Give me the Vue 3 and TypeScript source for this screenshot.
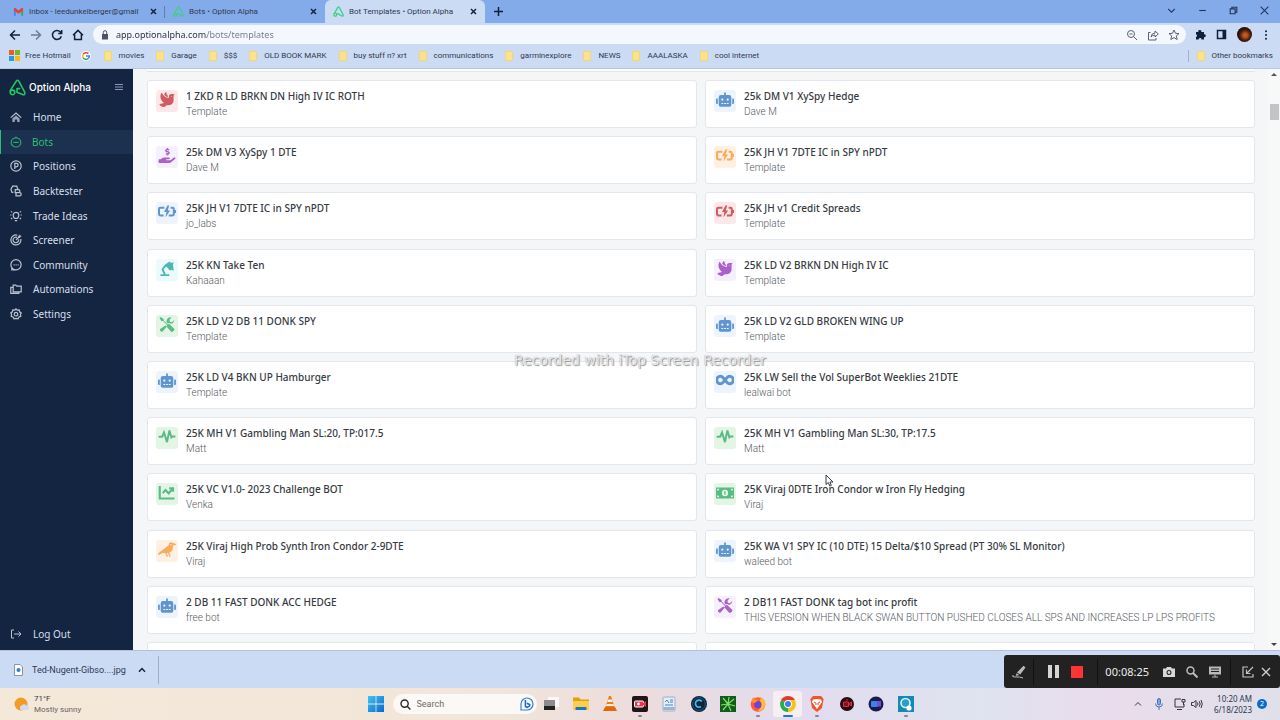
<script setup lang="ts">
interface Glyph {
  box: string
  fill?: string
  line?: string
  weight?: number
}
interface Bot {
  name: string
  by: string
  icon: string
  tone: string
}
interface NavItem {
  label: string
  line: string
  fill?: string
  active?: boolean
}

const glyphs: Record<string, Glyph> = {
  robot: {
    box: '0 0 640 512',
    fill: 'M32 224H64V416H32A32 32 0 0 1 0 384V256A32 32 0 0 1 32 224ZM544 176V448a64 64 0 0 1-64 64H160a64 64 0 0 1-64-64V176a80 80 0 0 1 80-80H288V32a32 32 0 0 1 64 0V96H464A80 80 0 0 1 544 176ZM264 256a40 40 0 1 0-40 40A40 40 0 0 0 264 256Zm-8 128H192v32h64Zm96 0H288v32h64ZM456 256a40 40 0 1 0-40 40A40 40 0 0 0 456 256Zm-8 128H384v32h64ZM640 256V384a32 32 0 0 1-32 32H576V224h32A32 32 0 0 1 640 256Z'
  },
  dove: {
    box: '0 0 512 512',
    fill: 'M288 167.2v-28.1c-28.2-36.3-47.1-79.3-54.1-125.2-2.1-13.5-19-18.8-27.8-8.3-21.1 24.9-37.7 54.1-48.9 86.5 34.2 38.3 80 64.6 130.8 75.1zM400 64c-44.2 0-80 35.9-80 80.1v59.4C215.6 197.3 127 133 87 41.8c-5.5-12.5-23.2-13.2-29-.9C41.4 76 32 115.2 32 156.6c0 70.8 34.1 136.9 85.1 185.9 13.2 12.7 26.1 23.2 38.9 32.8l-143.9 36C1.4 414-3.4 426.4 2.6 435.7 20 462.6 63 508.2 155.8 512c8 .3 16-2.6 22.1-7.9l65.2-56.1H320c88.4 0 160-71.5 160-159.9V128l32-64H400zm0 96.1c-8.8 0-16-7.2-16-16s7.2-16 16-16 16 7.2 16 16-7.2 16-16 16z'
  },
  hand: {
    box: '0 0 576 512',
    fill: 'M271 144.3l54.3 14.3a8.6 8.6 0 0 1 6.6 8.1c0 4.6-4 8.4-9.1 8.4h-35.6a30 30 0 0 1-11.2-2.2c-5.2-2.2-11.3-1.7-15.3 2l-19 17.5a11.7 11.7 0 0 0 1.6 18.4 83.8 83.8 0 0 0 34.5 11.5V240c0 8.8 7.8 16 17.4 16h17.4c9.5 0 17.4-7.2 17.4-16V222.4c32.9-3.6 57.8-31 53.5-63-3.2-23-22.5-41.3-46.6-47.7L282.7 97.4a8.6 8.6 0 0 1-6.6-8.1c0-4.6 4-8.4 9.1-8.4h35.6a30 30 0 0 1 11.2 2.2c5.2 2.2 11.3 1.7 15.3-2l19-17.5a11.4 11.4 0 0 0-1.7-18.4 83.8 83.8 0 0 0-34.5-11.5V16c0-8.8-7.8-16-17.4-16h-17.4C285.8 0 278 7.2 278 16V33.6c-32.9 3.6-57.9 31-53.5 63 3.1 23 22.5 41.3 46.5 47.7ZM565.3 328.1c-11.8-10.7-30.2-10-42.6 0L430.3 402a63.6 63.6 0 0 1-40 14H272a16 16 0 0 1 0-32h78.3c15.9 0 30.7-10.9 33.2-26.6A32 32 0 0 0 352 320H192a117.7 117.7 0 0 0-74.1 26.3L71.4 384H16a16 16 0 0 0-16 16v96a16 16 0 0 0 16 16H372.8a64 64 0 0 0 40-14L564 377a32 32 0 0 0 1.3-48.9Z'
  },
  crow: {
    box: '0 0 640 512',
    fill: 'M544 32h-16.4C513 12.7 490 0 464 0c-44.2 0-80 35.8-80 80v21L12.1 393.6A30.2 30.2 0 0 0 0 417.7c0 22.5 23.6 37.1 43.7 27L165.3 384h96.5l44.4 120.1c2.3 6.2 9.1 9.4 15.4 7.2l22.5-8.2c6.2-2.3 9.4-9.2 7.2-15.4L312.9 384H352l5.7-.3 44.5 120.4c2.3 6.2 9.1 9.4 15.4 7.2l22.5-8.2c6.2-2.3 9.4-9.2 7.2-15.4L401.2 371.4C471.8 347.6 523.5 281.4 528 201.9V112l112-16c0-44.2-43-64-96-64zm-80 72a24 24 0 1 1 0-48 24 24 0 0 1 0 48z'
  },
  battery: {
    box: '0 0 18 14',
    fill: 'M9.4 1 6 7.6h2.4L7.4 13l4.8-7H9.8L11.2 1Z',
    line: 'M6.4 3.2H2.6Q1 3.2 1 4.6v5Q1 11 2.600 11H5.600M12.600 3.200h1.600q1.600 0 1.600 1.400v5q0 1.400-1.600 1.400H10.800M17 5.600v3',
    weight: 2
  },
  lamp: {
    box: '0 0 18 16',
    fill: 'M7 3.6 11.8.6l1.4 1.6 2.8-1-.6 3 .8 6.2-2.4-1.2a2 2 0 0 1-3.4-1.6L6.8 5.4ZM2 14h9.4v2H2Z',
    line: 'M7.4 5 4.2 9l2.6 5.4',
    weight: 2
  },
  tools: {
    box: '0 0 16 16',
    fill: 'M1 0 0 1l2 3.2h1.8L8 8.4 7.4 10l4.8 5.4q1 1 2.2 0l1-1q1-1.2 0-2.2L10.4 7.4 8.8 8 4.4 3.6V2ZM15.7 3.2l-2.4 2.3-2.2-.4-.5-2.3L13 .3A4.4 4.4 0 0 0 7.7 5.8L9 7l1.4-.7 1.6 1A4.4 4.4 0 0 0 15.7 3.2ZM6.3 9 .7 12.8a2 2 0 0 0 2.6 2.7l4.3-5Z'
  },
  pulse: { box: '0 0 18 14', line: 'M.6 7.2h3.6L6 3l3 9.6L11.4.9l2 7 1-1h3', weight: 2 },
  chart: { box: '0 0 16 14', line: 'M1.2 1v11.6H15M4 7.6l2.6-2.8 3 3L13 3.6M10 3h3.6v3.4', weight: 2 },
  infinity: {
    box: '0 0 18 14',
    line: 'M9 6.6C7 3.8 5.8 2.8 4.4 2.8a3.6 3.6 0 0 0 0 7.4C5.8 10.2 7 9.2 9 6.6s3.2-3.8 4.6-3.8a3.6 3.6 0 0 1 0 7.4C12.2 10.2 11 9.2 9 6.6Z',
    weight: 3
  },
  money: {
    box: '0 0 18 14',
    fill: 'M0 2h18v11H0ZM1.2 3.2v2a2 2 0 0 0 2-2ZM1.2 11.8h2a2 2 0 0 0-2-2ZM16.8 3.2h-2a2 2 0 0 0 2 2ZM16.8 11.8v-2a2 2 0 0 0-2 2ZM9 4.2a3 3.2 0 1 0 0 6.6 3 3.2 0 0 0 0-6.6ZM8.2 5.8h1.4v3.4H8.4V7h-.6Z'
  }
}

const bots: Bot[] = [
  { name: '1 ZKD R LD BRKN DN High IV IC ROTH', by: 'Template', icon: 'dove', tone: 'red' },
  { name: '25k DM V1 XySpy Hedge', by: 'Dave M', icon: 'robot', tone: 'blue' },
  { name: '25k DM V3 XySpy 1 DTE', by: 'Dave M', icon: 'hand', tone: 'purple' },
  { name: '25K JH V1 7DTE IC in SPY nPDT', by: 'Template', icon: 'battery', tone: 'orange' },
  { name: '25K JH V1 7DTE IC in SPY nPDT', by: 'jo_labs', icon: 'battery', tone: 'blue' },
  { name: '25K JH v1 Credit Spreads', by: 'Template', icon: 'battery', tone: 'red' },
  { name: '25K KN Take Ten', by: 'Kahaaan', icon: 'lamp', tone: 'teal' },
  { name: '25K LD V2 BRKN DN High IV IC', by: 'Template', icon: 'dove', tone: 'purple' },
  { name: '25K LD V2 DB 11 DONK SPY', by: 'Template', icon: 'tools', tone: 'green' },
  { name: '25K LD V2 GLD BROKEN WING UP', by: 'Template', icon: 'robot', tone: 'blue' },
  { name: '25K LD V4 BKN UP Hamburger', by: 'Template', icon: 'robot', tone: 'blue' },
  { name: '25K LW Sell the Vol SuperBot Weeklies 21DTE', by: 'lealwai bot', icon: 'infinity', tone: 'blue' },
  { name: '25K MH V1 Gambling Man SL:20, TP:017.5', by: 'Matt', icon: 'pulse', tone: 'green' },
  { name: '25K MH V1 Gambling Man SL:30, TP:17.5', by: 'Matt', icon: 'pulse', tone: 'green' },
  { name: '25K VC V1.0- 2023 Challenge BOT', by: 'Venka', icon: 'chart', tone: 'green' },
  { name: '25K Viraj 0DTE Iron Condor w Iron Fly Hedging', by: 'Viraj', icon: 'money', tone: 'green' },
  { name: '25K Viraj High Prob Synth Iron Condor 2-9DTE', by: 'Viraj', icon: 'crow', tone: 'orange' },
  { name: '25K WA V1 SPY IC (10 DTE) 15 Delta/$10 Spread (PT 30% SL Monitor)', by: 'waleed bot', icon: 'robot', tone: 'blue' },
  { name: '2 DB 11 FAST DONK ACC HEDGE', by: 'free bot', icon: 'robot', tone: 'blue' },
  { name: '2 DB11 FAST DONK tag bot inc profit', by: 'THIS VERSION WHEN BLACK SWAN BUTTON PUSHED CLOSES ALL SPS AND INCREASES LP LPS PROFITS', icon: 'tools', tone: 'purple' }
]

const nav: NavItem[] = [
  { label: 'Home', line: 'M.8 6.6 6 2l5.2 4.6', fill: 'M2.4 7.4 6 4.4l3.6 3V11H7.2V8.4H4.8V11H2.4Z' },
  { label: 'Bots', line: 'M6 .6v2M1.2 6.4a4.8 4.6 0 0 1 9.6 0 4.8 4.6 0 0 1-9.6 0M3.4 6.4h5.2', active: true },
  { label: 'Positions', line: 'M.8 6a5.2 5.2 0 1 0 10.4 0A5.2 5.2 0 1 0 .8 6M4.8 9V3.4h1.6a1.6 1.6 0 0 1 0 3.4H4.8' },
  { label: 'Backtester', line: 'M3.4 7.4H2L.9 4.3 2.6 1.2h4.2l1 3M5.2 4.6h3.2a1 1 0 0 1 0 3H5.2ZM5.2 7.6h4.4a1.6 1.6 0 0 1 0 3.2H6V7.6' },
  { label: 'Trade Ideas', line: 'M4.6 8.4Q3.2 7 3.2 5.2a2.8 2.8 0 0 1 5.6 0Q8.8 7 7.4 8.4ZM4.8 10.6h2.4M.2 5h1.2M10.6 5h1.2M1 1.4l1.2 1M11 1.4l-1.2 1M1 9l1.2-1M11 9 9.8 8' },
  { label: 'Screener', line: 'M7.4 1.2A5 5 0 1 0 10.8 5M7 3.4A2.8 2.8 0 1 0 8.6 5.4M6 6l4-4', fill: 'M8 2.4 10 .2l.4 1.4 1.4.4-2.2 2H8Z' },
  { label: 'Community', line: 'M.9 5.8a5.1 5.1 0 1 0 10.2 0A5.1 5.1 0 1 0 .9 5.8M1.8 9v2H6M3.6 5.8h1M5.6 5.8h1M7.6 5.8h1' },
  { label: 'Automations', line: 'M3.2 2.2h2.6l1 1h4.4v5.6h-8ZM3 4.4H.8v6h8V9' },
  { label: 'Settings', line: 'M6 .8 7.2 2.2l2-.2.4 1.8 1.6 1.2-.8 1.4.4 2-1.8.6L8 10.8 6 10.4l-2 .4-1-1.8-1.8-.6.4-2L.8 5l1.6-1.2L2.8 2l2 .2ZM4.2 6.2a1.8 1.8 0 1 0 3.6 0 1.8 1.8 0 1 0-3.6 0' }
]

const folders = ['movies', 'Garage', '$$$', 'OLD BOOK MARK', 'buy stuff n? xrt', 'communications', 'garminexplore', 'NEWS', 'AAALASKA', 'cool internet']

const tabs = [
  { title: 'Inbox - leedunkelberger@gmail', kind: 'mail', active: false },
  { title: 'Bots • Option Alpha', kind: 'alpha', active: false },
  { title: 'Bot Templates • Option Alpha', kind: 'alpha', active: true }
]
</script>

<template>
  <div class="screen">
    <header class="tabbar">
      <div v-for="t in tabs" :key="t.title" class="tab" :class="{ active: t.active }">
        <svg v-if="t.kind === 'mail'" class="fav" viewBox="0 0 12 12">
          <path d="M1 10.5V2.6l2 1.6v6.3Z" fill="#4285f4" /><path d="M9 10.5V4.2l2-1.6v7.9Z" fill="#34a853" />
          <path d="M1 2.6 2.4 2 6 5l3.6-3 1.4.6v2.2L6 8.4 1 4.8Z" fill="#e0443a" />
        </svg>
        <svg v-else class="fav" viewBox="0 0 17 17" fill="none" stroke="#3fcf86" stroke-width="2" stroke-linejoin="round" stroke-linecap="round">
          <path d="M1.2 13.400a2.300 2.300 0 1 0 4.600 0 2.300 2.300 0 1 0-4.600 0L7.400 2.200q1.200-1.600 2.400 0L15.800 13.800q.4 2-1.600 2L7.400 11.800" />
        </svg>
        <span class="tab-title">{{ t.title }}</span>
        <button class="plain" aria-label="Close tab">
          <svg width="7" height="7" viewBox="0 0 7 7" stroke="#16233c" stroke-width="1.500"><path d="M1 1l5 5M6 1 1 6" /></svg>
        </button>
      </div>
      <button class="plain new-tab" aria-label="New tab">
        <svg width="9" height="9" viewBox="0 0 9 9" stroke="#10203c" stroke-width="1.500"><path d="M4.500 0v9M0 4.500h9" /></svg>
      </button>
      <div class="window-buttons">
        <button class="plain" aria-label="Search tabs"><svg viewBox="0 0 10 10"><path d="M2 3.500 5 6.500 8 3.500" /></svg></button>
        <button class="plain" aria-label="Minimize"><svg viewBox="0 0 10 10"><path d="M2 5h6" /></svg></button>
        <button class="plain" aria-label="Restore"><svg viewBox="0 0 10 10"><path d="M2 3.500h4.500V8H2ZM3.500 3.500V2H8v4.500H6.500" /></svg></button>
        <button class="plain" aria-label="Close"><svg viewBox="0 0 10 10"><path d="M1.500 1.500l7 7M8.500 1.500l-7 7" /></svg></button>
      </div>
    </header>

    <div class="toolbar">
      <button class="plain tool" aria-label="Back"><svg viewBox="0 0 12 12"><path d="M11 6H1.500M6 1.500 1.500 6 6 10.500" /></svg></button>
      <button class="plain tool faded" aria-label="Forward"><svg viewBox="0 0 12 12"><path d="M1 6h9.500M6 1.500 10.500 6 6 10.500" /></svg></button>
      <button class="plain tool" aria-label="Reload"><svg viewBox="0 0 12 12"><path d="M10.300 7.200A4.500 4.500 0 1 1 9.200 2.800L10.600 4.200M10.700 1v3.400H7.200" /></svg></button>
      <button class="plain tool" aria-label="Home page"><svg viewBox="0 0 12 12"><path d="M1 6.200 6 1.400l5 4.800M2.600 5.200v5.400h6.800V5.200" /></svg></button>
      <div class="address">
        <svg width="8" height="10" viewBox="0 0 8 10"><path d="M1 4h6v5.500H1Z" fill="#4c5362" /><path d="M2.300 4V2.400a1.700 1.700 0 0 1 3.400 0V4" fill="none" stroke="#4c5362" /></svg>
        <input class="url" aria-label="Address" value="app.optionalpha.com/bots/templates" />
        <button class="plain" aria-label="Zoom"><svg class="thin" viewBox="0 0 12 12"><path d="M1.500 5a3.500 3.500 0 1 0 7 0 3.500 3.500 0 1 0-7 0M7.600 7.600 11 11M3.500 5h3" /></svg></button>
        <button class="plain" aria-label="Share"><svg class="thin" viewBox="0 0 12 12"><path d="M3.500 3.500H1.500V11H9V9M4 8q.4-4 4-4V2l3.300 3L8 8V6Q5.500 6 4 8Z" /></svg></button>
        <button class="plain" aria-label="Bookmark"><svg class="thin" viewBox="0 0 12 12"><path d="M6 1l1.500 3.300 3.500.3-2.700 2.300.9 3.600L6 8.600l-3.200 1.900.9-3.600L1 4.600l3.500-.3Z" /></svg></button>
      </div>
      <div class="extras">
        <button class="plain" aria-label="Extensions"><svg width="11" height="11" viewBox="0 0 11 11"><path d="M1 3h2.400a1.500 1.500 0 1 1 2.800 0H9v2.400a1.400 1.400 0 1 1 0 2.700V10.500H6.500a1.400 1.400 0 0 0-2.800 0H1V8a1.400 1.400 0 0 0 0-2.700Z" fill="#10203c" /></svg></button>
        <button class="plain" aria-label="Side panel"><svg width="11" height="11" viewBox="0 0 11 11"><path d="M1.500 1.500h8v8h-8Z" fill="none" stroke="#10203c" stroke-width="1.500" /><path d="M6.500 1.500h3v8h-3Z" fill="#10203c" /></svg></button>
        <button class="plain avatar" aria-label="Profile"></button>
        <button class="plain more" aria-label="Menu"><svg width="4" height="10" viewBox="0 0 4 10" fill="#10203c"><circle cx="2" cy="1.200" r="1" /><circle cx="2" cy="5" r="1" /><circle cx="2" cy="8.800" r="1" /></svg></button>
      </div>
    </div>

    <nav class="bookmarks" aria-label="Bookmarks">
      <a href="#" class="mark">
        <svg width="11" height="11" viewBox="0 0 11 11"><path d="M0 0h5v5H0Z" fill="#ee5a2c" /><path d="M6 0h5v5H6Z" fill="#7cb518" /><path d="M0 6h5v5H0Z" fill="#1ba0e8" /><path d="M6 6h5v5H6Z" fill="#f9b813" /></svg>
        Free Hotmail
      </a>
      <a href="#" class="google" aria-label="Google">
        <svg width="10" height="10" viewBox="0 0 10 10" fill="none" stroke-width="1.500">
          <circle cx="5" cy="5" r="5" fill="#fff" stroke="none" />
          <path d="M7.400 2.600A3.400 3.400 0 0 0 2 3.500" stroke="#ea4335" /><path d="M2 3.500a3.400 3.400 0 0 0 0 3" stroke="#fbbc05" />
          <path d="M2 6.500a3.400 3.400 0 0 0 5.300 1" stroke="#34a853" /><path d="M7.300 7.500A3.400 3.400 0 0 0 8.400 5H5" stroke="#4285f4" />
        </svg>
      </a>
      <a v-for="f in folders" :key="f" href="#" class="mark"><i class="folder"></i>{{ f }}</a>
      <a href="#" class="mark other"><i class="folder"></i>Other bookmarks</a>
    </nav>

    <div class="app">
      <aside class="side">
        <div class="brand">
          <svg width="17" height="17" viewBox="0 0 17 17" fill="none" stroke="#22c55e" stroke-width="1.600" stroke-linejoin="round" stroke-linecap="round">
            <path d="M1.2 13.400a2.300 2.300 0 1 0 4.600 0 2.300 2.300 0 1 0-4.600 0V11.600L7.200 2.200q1.300-2 2.600 0L15.800 13.400q.4 2.400-1.600 2.400L8 13.200V9.600h2.600" />
          </svg>
          <span class="brand-name">Option Alpha</span>
          <button class="plain" aria-label="Collapse menu"><svg width="8" height="8" viewBox="0 0 8 8" stroke="#8b99b2"><path d="M0 1.500h8M0 4h8M0 6.500h8" /></svg></button>
        </div>
        <nav class="menu" aria-label="Main">
          <a v-for="n in nav" :key="n.label" href="#" class="item" :class="{ active: n.active }">
            <svg width="12" height="12" viewBox="0 0 12 12"><path :d="n.line" fill="none" stroke="currentColor" stroke-width="1.200" /><path v-if="n.fill" :d="n.fill" fill="currentColor" opacity=".8" /></svg>
            {{ n.label }}
          </a>
        </nav>
        <a href="#" class="item logout">
          <svg width="12" height="12" viewBox="0 0 12 12" fill="none" stroke="currentColor"><path d="M4 2H1.500v8H4M4 6h7M8.500 3.500 11 6 8.500 8.500" /></svg>
          Log Out
        </a>
      </aside>

      <main class="main">
        <div class="scroll-area">
          <div class="previous"></div>
          <ul class="grid">
            <li v-for="(b, i) in bots" :key="i" class="card">
              <span class="tile" :class="b.tone">
                <svg :viewBox="glyphs[b.icon].box" width="18" height="15">
                  <path v-if="glyphs[b.icon].fill" :d="glyphs[b.icon].fill" fill="currentColor" fill-rule="evenodd" />
                  <path v-if="glyphs[b.icon].line" :d="glyphs[b.icon].line" fill="none" stroke="currentColor" :stroke-width="glyphs[b.icon].weight" />
                </svg>
              </span>
              <div class="text">
                <h2>{{ b.name }}</h2>
                <p>{{ b.by }}</p>
              </div>
            </li>
            <li class="card"></li>
            <li class="card"></li>
          </ul>
        </div>
        <div class="scrollbar"><i class="up"></i><i class="thumb"></i><i class="down"></i></div>
      </main>
    </div>

    <footer class="downloads">
      <button class="plain file">
        <svg width="9" height="12" viewBox="0 0 9 12"><path d="M.5.500H6L8.500 3v8.500h-8Z" fill="#fff" stroke="#8a94a8" /><circle cx="4.500" cy="6" r="2" fill="#2e7fd6" /></svg>
        Ted-Nugent-Gibso....jpg
      </button>
      <button class="plain" aria-label="Download options"><svg width="8" height="6" viewBox="0 0 8 6" fill="none" stroke="#16233c" stroke-width="1.500"><path d="M1 4.800 4 1.500 7 4.800" /></svg></button>
    </footer>

    <footer class="taskbar">
      <div class="weather">
        <svg width="15" height="15" viewBox="0 0 15 15"><circle cx="7" cy="7" r="6.500" fill="#f59a23" /><path d="M7 13a2.500 2.500 0 0 1 .4-4.400 3 3 0 0 1 5-.2A2.300 2.300 0 0 1 13 13Z" fill="#cfdcf2" /></svg>
        <p>71°F<br /><span>Mostly sunny</span></p>
      </div>
      <div class="dock">
        <button class="plain" aria-label="Start"><svg width="16" height="16" viewBox="0 0 16 16"><defs><linearGradient id="win" x2="1" y2="1"><stop stop-color="#3cc4f5" /><stop offset="1" stop-color="#0a68cf" /></linearGradient></defs><path d="M0 0h7.600v7.600H0ZM8.400 0H16v7.600H8.400ZM0 8.400h7.600V16H0ZM8.400 8.400H16V16H8.400Z" fill="url(#win)" /></svg></button>
        <label class="search">
          <svg width="11" height="11" viewBox="0 0 11 11" fill="none" stroke="#26282e" stroke-width="1.400"><circle cx="4.600" cy="4.600" r="3.600" /><path d="M7.200 7.200 10.400 10.400" /></svg>
          <input placeholder="Search" aria-label="Search" />
          <svg width="14" height="14" viewBox="0 0 14 14" fill="none"><path d="M1 13V7a6 6 0 1 1 6 6Z" stroke="#2a88de" stroke-width="1.200" /><path d="M5.400 3v6.500l1.800 1 2.500-1.600V7.500L6.800 6.300" stroke="#2065c8" stroke-width="1.500" /></svg>
        </label>
        <div class="apps">
          <button class="plain" aria-label="Task view"><svg viewBox="0 0 16 16"><path d="M5 1h11v10H5Z" fill="#fbf9f7" /><path d="M1 4h11v10H1Z" fill="#8d8d90" /><path d="M1 10h11v4H1Z" fill="#222" /></svg></button>
          <button class="plain" aria-label="File Explorer"><svg viewBox="0 0 16 16"><path d="M0 1.500h6l1.500 2H16V14H0Z" fill="#dfa012" /><path d="M0 5h16v9H0Z" fill="#fbcf4c" /><path d="M3.500 11h9q1 0 1 1v2h-11v-2q0-1 1-1Z" fill="#1577c8" /></svg></button>
          <button class="plain" aria-label="VLC"><svg viewBox="0 0 16 16"><path d="M7 0h2l3.500 11h-9Z" fill="#ef7d16" /><path d="M6 3.500h4l.8 2.500H5.200ZM4.500 8h7l.6 2h-8.200Z" fill="#f1ece6" /><path d="M3 11h10l2 4H1Z" fill="#dd6a0b" /></svg></button>
          <button class="plain running" aria-label="Screen recorder"><svg viewBox="0 0 16 16"><rect width="16" height="16" rx="2" fill="#201517" /><rect x="2.500" y="5" width="9" height="6" rx="1" fill="#e9364f" stroke="#fff" /><path d="M11 7l3-2v6l-3-2" fill="#e9364f" /><circle cx="6.500" cy="8" r="1.400" fill="#fff" /></svg></button>
          <button class="plain" aria-label="Notepad"><svg viewBox="0 0 16 16"><rect x="2" y="1" width="12" height="14" rx="1" fill="#e5edf5" stroke="#9bb2cb" /><path d="M4 6l2-2 2 3M9 4h3M9 6h3M4 9h8" stroke="#4286cf" fill="none" /><path d="M2.500 11h11v3h-11Z" fill="#a0b4c9" /></svg></button>
          <button class="plain" aria-label="Cleaner"><svg viewBox="0 0 16 16"><circle cx="8" cy="8" r="8" fill="#102334" /><circle cx="8" cy="8" r="6.300" stroke="#125b8a" fill="none" /><path d="M10.800 5.500A3.500 3.500 0 1 0 10 10.500" stroke="#39b8f2" stroke-width="1.800" fill="none" /></svg></button>
          <button class="plain" aria-label="Green app"><svg viewBox="0 0 16 16"><path d="M0 0h16v16H0Z" fill="#115c1a" /><path d="M8 8 3 2M8 8l1-7M8 8l6-5M8 8l7 2M8 8l3 7M8 8l-5 6M8 8 1 9" stroke="#7ee064" stroke-width="1.200" /></svg></button>
          <button class="plain running" aria-label="Firefox"><svg viewBox="0 0 16 16"><circle cx="8" cy="8.500" r="7.300" fill="#ff5c35" /><path d="M11 1q5 3 4 8.500A7 7 0 0 1 8 15Q13 10 10 5Z" fill="#ffbd32" /><circle cx="7.800" cy="8.800" r="3.700" fill="#7a3fd2" /><path d="M1 6q1-4 3-5 0 3 4 3L5 7Z" fill="#ff8f25" /></svg></button>
          <button class="plain running current" aria-label="Chrome"><svg viewBox="0 0 16 16"><path d="M8 8 1.100 4A8 8 0 0 1 14.900 4Z" fill="#e33b2e" /><path d="M8 8 1.100 4A8 8 0 0 0 8 16L11.500 10Z" fill="#2da94f" /><path d="M8 8V4h6.900A8 8 0 0 1 8 16Z" fill="#fbc116" /><circle cx="8" cy="8" r="3.900" fill="#fff" /><circle cx="8" cy="8" r="3" fill="#3e7ff0" /></svg></button>
          <button class="plain running" aria-label="Brave"><svg viewBox="0 0 16 16"><path d="M4 0h8l2.600 3L13 12l-5 4-5-4L1.400 3Z" fill="#f3542b" /><path d="M4 3.500 8 3l4 .5 1 2.500-2.500 3.500L8 13 5.500 9.500 3 6Z" fill="#fff" /><path d="M5 6l2 1v2M11 6 9 7v2" stroke="#f3542b" fill="none" /></svg></button>
          <button class="plain" aria-label="Capture"><svg viewBox="0 0 16 16"><circle cx="8" cy="8" r="7" fill="#250d12" /><path d="M4.500 6h5v4.500h-5ZM9.500 8l3-2v4Z" stroke="#e22a3c" fill="#7d1422" /><path d="M8 3v2" stroke="#e22a3c" /></svg></button>
          <button class="plain" aria-label="Editor"><svg viewBox="0 0 16 16"><circle cx="8" cy="8" r="7.500" fill="#1c1c4c" /><rect x="3" y="5" width="7" height="6" rx="1" fill="#3d82ec" /><path d="M9 5h4v5.500H9Z" fill="#6a52d8" /></svg></button>
          <button class="plain running" aria-label="Q app"><svg viewBox="0 0 16 16"><path d="M0 0h16v16H0Z" fill="#1787b4" /><circle cx="7.500" cy="7" r="4.500" fill="#2a9fca" stroke="#dff3fa" stroke-width="1.600" /><circle cx="11" cy="12" r="2.600" fill="#fff" /></svg></button>
        </div>
      </div>
      <div class="tray">
        <svg width="8" height="6" viewBox="0 0 8 6" fill="none" stroke="#34343c"><path d="M1 4.500 4 1.500l3 3" /></svg>
        <svg class="mic" width="8" height="12" viewBox="0 0 8 12" fill="none" stroke="#4a74b8"><rect x="2.500" y=".5" width="3" height="6.500" rx="1.500" fill="#7fa3dc" /><path d="M.5 5.500a3.500 3.500 0 0 0 7 0M4 9v3" /></svg>
        <svg width="12" height="12" viewBox="0 0 12 12" fill="none" stroke="#34343c"><path d="M7 1H1v8h9V6M3 11.500h5M8 1.500h3v2.500H8ZM9.500 4v3" /></svg>
        <svg width="12" height="12" viewBox="0 0 12 12" fill="none" stroke="#34343c"><path d="M.5 4.500h2L5 2.500v7L2.500 7.500h-2ZM6.500 4.500q1 1.500 0 3M8.200 3.200q2 2.800 0 5.600M10 2q2.500 4 0 8" /></svg>
        <p class="clock">10:20 AM<br />6/18/2023</p>
        <span class="badge">2</span>
      </div>
    </footer>

    <div class="recorder">
      <button class="plain seg pen" aria-label="Draw"><svg width="14" height="14" viewBox="0 0 14 14"><path d="M11.500.800 13.500 2.500 8.200 9.500 5 7.500ZM4.500 8.200l2.800 1.800-3.600 1Z" fill="#b9b9b9" /><path d="M1 10q-1.500 2 2 2 5-.5 8 1" stroke="#b9b9b9" fill="none" /></svg></button>
      <div class="seg controls">
        <button class="plain pause" aria-label="Pause"></button>
        <button class="plain stop" aria-label="Stop"></button>
      </div>
      <div class="seg status">
        <time>00:08:25</time>
        <button class="plain" aria-label="Screenshot"><svg width="12" height="12" viewBox="0 0 12 12"><path d="M0 2.500h3L4 1h4l1 1.500h3V11H0ZM6 4a2.500 2.500 0 1 0 0 5 2.500 2.500 0 0 0 0-5Z" fill="#d8d8d8" fill-rule="evenodd" /><circle cx="6" cy="6.500" r="1.400" fill="#d8d8d8" /></svg></button>
        <button class="plain" aria-label="Magnify"><svg width="12" height="12" viewBox="0 0 12 12" fill="none" stroke="#bdbdbd" stroke-width="1.500"><circle cx="4.500" cy="4.500" r="3.500" /><path d="M7 7l4.500 4.500" stroke-width="2" /></svg></button>
        <button class="plain" aria-label="Captions"><svg width="12" height="12" viewBox="0 0 12 12"><path d="M0 .5h12v8H0Z" fill="#b9b9b9" /><path d="M2 3h8M2 5.500h8" stroke="#222" /><path d="M6 8.500V11M3 11h6" stroke="#b9b9b9" /></svg></button>
      </div>
      <div class="seg finish">
        <button class="plain" aria-label="Shrink"><svg width="12" height="12" viewBox="0 0 12 12" fill="none" stroke="#c4c4c4" stroke-width="1.200"><path d="M6 1H1v10h10V8M11 1 5 7M4.500 3.500V7.500h4" /></svg></button>
        <button class="plain" aria-label="Close recorder"><svg width="10" height="10" viewBox="0 0 10 10" stroke="#d0d0d0" stroke-width="1.400"><path d="M1 1l8 8M9 1 1 9" /></svg></button>
      </div>
    </div>

    <p class="watermark">Recorded with iTop Screen Recorder</p>
    <svg class="pointer" width="9" height="13" viewBox="0 0 9 13"><path d="M1 1v9.500l2.300-2 1.500 3.600 1.500-.7L4.900 8H8Z" fill="#fff" stroke="#333a48" /></svg>
  </div>
</template>

<style>
body {
  margin: 0;
}
</style>

<style scoped>
* {
  box-sizing: border-box;
}
.screen {
  position: relative;
  display: flex;
  flex-direction: column;
  height: 100vh;
  overflow: hidden;
  font: 9px/12px 'Noto Sans', 'Open Sans', sans-serif;
  color: #2c3950;
}
svg {
  display: block;
  flex: none;
}
p,
h2,
ul {
  margin: 0;
  padding: 0;
}
a {
  color: inherit;
  text-decoration: none;
}
input {
  min-width: 0;
  border: 0;
  padding: 0;
  outline: 0;
  background: none;
  font: inherit;
  color: inherit;
}
.plain {
  display: flex;
  align-items: center;
  justify-content: center;
  flex: none;
  padding: 0;
  border: 0;
  background: none;
  font: inherit;
  color: inherit;
}
.tabbar {
  display: flex;
  align-items: center;
  height: 23px;
  padding-left: 5px;
  background: #84abe9;
}
.tab {
  display: flex;
  align-items: center;
  gap: 5px;
  width: 160px;
  height: 100%;
  padding: 0 8px 0 8px;
  font: 8px/12px Roboto, 'Noto Sans', sans-serif;
}
.tab:first-child {
  background: linear-gradient(#5f7fb4, #5f7fb4) right / 1px 12px no-repeat;
}
.tab.active {
  background: #ccdbf4;
  border-radius: 6px 6px 0 0;
}
.fav {
  width: 11px;
  height: 11px;
}
.tab-title {
  flex: 1;
  overflow: hidden;
  white-space: nowrap;
}
.new-tab {
  margin-left: 9px;
}
.window-buttons {
  display: flex;
  gap: 20px;
  margin-left: auto;
  padding: 0 10px 3px 0;
}
.window-buttons svg {
  width: 11px;
  height: 11px;
  fill: none;
  stroke: #22355c;
}
.toolbar {
  display: flex;
  align-items: center;
  gap: 9px;
  height: 23px;
  padding: 0 12px 0 9px;
  background: #ccdbf4;
}
.tool svg {
  width: 12px;
  height: 12px;
  fill: none;
  stroke: #10203c;
  stroke-width: 1.5;
}
.tool.faded {
  opacity: 0.5;
}
.address {
  display: flex;
  align-items: center;
  gap: 9px;
  flex: 1;
  height: 19px;
  padding: 0 6px 0 8px;
  border-radius: 10px;
  background: #f4f7fc;
}
.url {
  flex: 1;
  margin-left: -2px;
  height: 18px;
  background: linear-gradient(90deg, #28303e 91px, #737a88 91px);
  background-clip: text;
  color: transparent;
}
.thin {
  width: 12px;
  height: 12px;
  fill: none;
  stroke: #5a6272;
}
.extras {
  display: flex;
  align-items: center;
  gap: 10px;
}
.more {
  margin-left: 2px;
}
.avatar {
  width: 15px;
  height: 15px;
  border-radius: 50%;
  background: radial-gradient(circle at 55% 55%, #c05a1a 0 15%, #4a1c0c 45%, #0d0807 75%);
}
.bookmarks {
  display: flex;
  align-items: center;
  gap: 12px;
  height: 23px;
  padding: 0 7px 3px 9px;
  background: #ccdbf4;
  border-bottom: 1px solid #b9c7e0;
  font: 8px/12px Roboto, 'Noto Sans', sans-serif;
  white-space: nowrap;
}
.mark {
  display: flex;
  align-items: center;
  gap: 7px;
}
.google {
  margin: 0 1px 0 -2px;
}
.mark:first-child {
  gap: 5px;
}
.folder {
  width: 8px;
  height: 10px;
  background: #fce28a;
  border: 1px solid #f3d672;
  border-radius: 1px;
}
.other {
  margin-left: auto;
  padding-left: 8px;
  border-left: 1px solid #a3b4d3;
}
.app {
  display: flex;
  flex: 1;
  min-height: 0;
}
.side {
  display: flex;
  flex-direction: column;
  width: 133px;
  background: #142542;
  color: #d9dfe9;
  font-size: 10px;
}
.brand {
  display: flex;
  align-items: center;
  gap: 3px;
  height: 36px;
  padding: 0 10px 0 9px;
}
.brand-name {
  flex: none;
  margin-right: auto;
  white-space: nowrap;
  font: 500 10px/16px Inter, sans-serif;
  color: #fff;
}
.menu {
  display: flex;
  flex-direction: column;
  min-height: 221px;
}
.item {
  display: flex;
  align-items: center;
  flex: 1;
  gap: 11px;
  padding-left: 10px;
}
.item svg {
  opacity: 0.85;
}
.item.active {
  padding-left: 9px;
  gap: 10px;
  background: #1c3150;
  border-left: 1px solid #2fbf71;
  color: #2fbf71;
}
.logout {
  flex: none;
  height: 32px;
  margin-top: auto;
}
.main {
  display: flex;
  flex: 1;
  min-width: 0;
  background: #f5f6f8;
}
.scroll-area {
  flex: 1;
  min-width: 0;
  padding: 0 13px 0 14px;
  overflow: hidden;
}
.previous {
  height: 3px;
  margin-bottom: 8px;
  background: #fff;
  border-bottom: 1px solid #dfe6ea;
}
.grid {
  display: grid;
  grid-template-columns: 1fr 1fr;
  align-content: space-between;
  column-gap: 8px;
  min-height: 610px;
  list-style: none;
}
.card {
  display: flex;
  gap: 8px;
  min-width: 0;
  height: 48px;
  padding: 9px 8px;
  background: #fff;
  border: 1px solid #e3e6ea;
  border-radius: 3px;
}
.tile {
  display: flex;
  flex: none;
  justify-content: center;
  width: 22px;
  height: 22px;
  padding-top: 2px;
  border-radius: 3px;
}
.blue { color: #6096cf; background: #edf4fd; }
.red { color: #cf5c60; background: #fce8e8; }
.purple { color: #aa62c9; background: #f6effd; }
.orange { color: #f9aa5c; background: #fef0e2; }
.teal { color: #4db8b0; background: #ebfafa; }
.green { color: #59bc86; background: #e4f5e5; }
.text {
  min-width: 0;
  white-space: nowrap;
}
h2 {
  font-size: 10px;
  line-height: 12px;
  font-weight: 500;
  color: #363a42;
}
.text p {
  margin-top: 4px;
  font: 300 10px/12px Roboto, 'Noto Sans', sans-serif;
  color: #555a62;
}
.scrollbar {
  display: flex;
  flex-direction: column;
  align-items: center;
  width: 12px;
  padding: 4px 0;
  background: #f7f8f8;
}
.up,
.down {
  border: 3px solid transparent;
}
.up {
  border-top: 0;
  border-bottom-color: #555;
}
.down {
  margin-top: auto;
  border-bottom: 0;
  border-top-color: #444;
}
.thumb {
  width: 9px;
  height: 16px;
  margin-top: 28px;
  background: #c4c4c6;
}
.downloads {
  display: flex;
  align-items: center;
  height: 38px;
  padding-left: 14px;
  background: #ccdbf4;
  border-top: 1px solid #b4c1da;
}
.file {
  gap: 9px;
  font: 9px/12px Roboto, 'Noto Sans', sans-serif;
}
.downloads > button:last-child {
  width: 33px;
  height: 28px;
  border-right: 1px solid #9dadca;
}
.taskbar {
  display: grid;
  grid-template-columns: 1fr auto 1fr;
  align-items: center;
  height: 32px;
  background: linear-gradient(90deg, #f4e8d9, #f2e6da 38%, #ecdcdc 50%, #e2dcee 62%, #dfe3f0 76%, #eadcec 87%, #dfe0ea);
}
.weather {
  display: flex;
  align-items: center;
  gap: 5px;
  padding-left: 14px;
  font: 8px/11px Roboto, 'Noto Sans', sans-serif;
}
.weather span {
  color: #676462;
}
.dock {
  display: flex;
  align-items: center;
  padding-left: 8px;
}
.search {
  display: flex;
  align-items: center;
  gap: 6px;
  width: 144px;
  height: 20px;
  margin-left: 9px;
  padding: 0 3px 0 7px;
  border-radius: 10px;
  background: #fcf8f5;
}
.search input {
  flex: 1;
  font-family: Roboto, 'Noto Sans', sans-serif;
  font-size: 9px;
}
.search input::placeholder {
  color: #6c6a6a;
}
.apps {
  display: flex;
  width: 384px;
}
.apps button {
  position: relative;
  flex: 1;
  height: 26px;
}
.apps svg {
  width: 16px;
  height: 16px;
}
.running::after {
  content: '';
  position: absolute;
  bottom: 0;
  width: 4px;
  height: 2px;
  border-radius: 1px;
  background: #8a878c;
}
.current {
  border-radius: 3px;
  background: #f5eff1;
}
.current::after {
  width: 10px;
  background: #1f76d0;
}
.tray {
  display: flex;
  align-items: center;
  justify-content: flex-end;
  gap: 5px;
  padding-right: 13px;
}
.mic {
  margin: 0 6px 0 8px;
}
.clock {
  margin-left: 6px;
  font-size: 8px;
  line-height: 11px;
  text-align: right;
}
.badge {
  width: 10px;
  height: 10px;
  border-radius: 50%;
  background: #0f6cc4;
  color: #fff;
  font-size: 7px;
  line-height: 10px;
  text-align: center;
}
.recorder {
  position: absolute;
  right: 0;
  bottom: 32px;
  display: flex;
  align-items: center;
  height: 33px;
  border-radius: 3px;
  background: #222;
}
.seg {
  display: flex;
  align-items: center;
  justify-content: center;
  height: 26px;
  border-right: 1px solid #111;
}
.seg:last-child {
  border-right: 0;
}
.pen {
  width: 30px;
}
.controls {
  gap: 12px;
  width: 64px;
}
.pause {
  width: 11px;
  height: 13px;
  border: solid #d5d5d5;
  border-width: 0 4px;
}
.stop {
  width: 12px;
  height: 12px;
  background: #fb3434;
}
.status {
  justify-content: flex-end;
  gap: 11px;
  width: 133px;
  padding-right: 9px;
}
.status time {
  margin-right: 3px;
  font-size: 11px;
  color: #ececec;
}
.finish {
  justify-content: flex-start;
  gap: 7px;
  width: 49px;
  padding-left: 11px;
}
.watermark {
  position: absolute;
  top: 50%;
  left: 50%;
  transform: translate(-50%, -50%);
  font: 14px/20px 'DejaVu Sans', sans-serif;
  white-space: nowrap;
  color: #e6e7e9;
  text-shadow: 1px 1px 1px #8f9195, 0 0 1px #b5b7bb;
  pointer-events: none;
}
.pointer {
  position: absolute;
  left: 825px;
  top: 474px;
}
</style>
